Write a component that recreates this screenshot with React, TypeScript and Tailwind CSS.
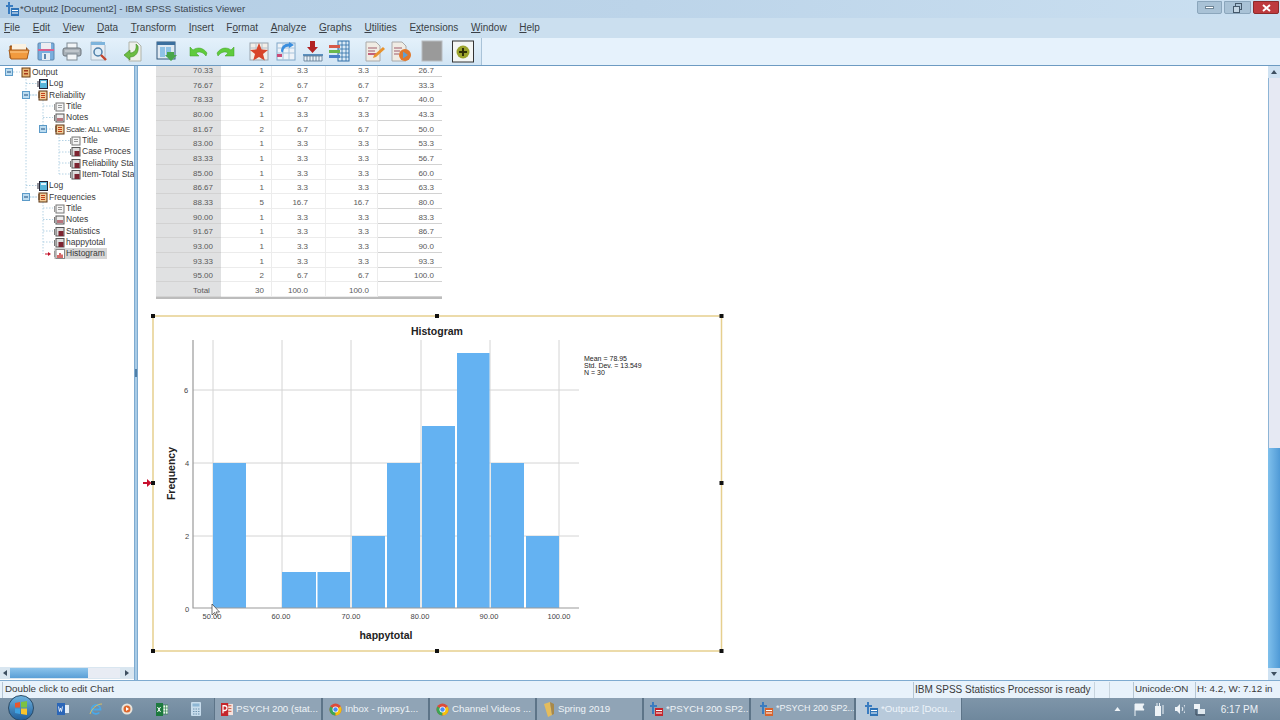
import type { ReactNode } from "react";

const menuItems: [string, string, string][] = [
  ["", "F", "ile"],
  ["", "E", "dit"],
  ["", "V", "iew"],
  ["", "D", "ata"],
  ["", "T", "ransform"],
  ["", "I", "nsert"],
  ["F", "o", "rmat"],
  ["", "A", "nalyze"],
  ["", "G", "raphs"],
  ["", "U", "tilities"],
  ["E", "x", "tensions"],
  ["", "W", "indow"],
  ["", "H", "elp"],
];

const tableRows = [
  ["70.33", "1", "3.3", "3.3", "26.7"],
  ["76.67", "2", "6.7", "6.7", "33.3"],
  ["78.33", "2", "6.7", "6.7", "40.0"],
  ["80.00", "1", "3.3", "3.3", "43.3"],
  ["81.67", "2", "6.7", "6.7", "50.0"],
  ["83.00", "1", "3.3", "3.3", "53.3"],
  ["83.33", "1", "3.3", "3.3", "56.7"],
  ["85.00", "1", "3.3", "3.3", "60.0"],
  ["86.67", "1", "3.3", "3.3", "63.3"],
  ["88.33", "5", "16.7", "16.7", "80.0"],
  ["90.00", "1", "3.3", "3.3", "83.3"],
  ["91.67", "1", "3.3", "3.3", "86.7"],
  ["93.00", "1", "3.3", "3.3", "90.0"],
  ["93.33", "1", "3.3", "3.3", "93.3"],
  ["95.00", "2", "6.7", "6.7", "100.0"],
  ["Total", "30", "100.0", "100.0", ""],
];

type TreeKind = "root" | "log" | "book" | "title" | "notes" | "table" | "hist";

// labels are what fits in the pane before it cuts them off
const treeRows: { label: string; pad: string; kind: TreeKind; selected?: boolean; text?: string }[] = [
  { label: "Output", pad: "pl-[20px]", kind: "root" },
  { label: "Log", pad: "pl-[37px]", kind: "log" },
  { label: "Reliability", pad: "pl-[37px]", kind: "book" },
  { label: "Title", pad: "pl-[54px]", kind: "title" },
  { label: "Notes", pad: "pl-[54px]", kind: "notes" },
  { label: "Scale: ALL VARIAE", pad: "pl-[54px]", kind: "book", text: "text-[8px] tracking-[-0.3px]" },
  { label: "Title", pad: "pl-[70px]", kind: "title" },
  { label: "Case Proces", pad: "pl-[70px]", kind: "table" },
  { label: "Reliability Sta", pad: "pl-[70px]", kind: "table" },
  { label: "Item-Total Sta", pad: "pl-[70px]", kind: "table" },
  { label: "Log", pad: "pl-[37px]", kind: "log" },
  { label: "Frequencies", pad: "pl-[37px]", kind: "book" },
  { label: "Title", pad: "pl-[54px]", kind: "title" },
  { label: "Notes", pad: "pl-[54px]", kind: "notes" },
  { label: "Statistics", pad: "pl-[54px]", kind: "table" },
  { label: "happytotal", pad: "pl-[54px]", kind: "table" },
  { label: "Histogram", pad: "pl-[54px]", kind: "hist", selected: true },
];

const bars = [
  [213, 246, 463],
  [282, 316, 572],
  [317.5, 350, 572],
  [352, 385, 536],
  [387, 420, 463],
  [422, 455, 426],
  [457, 489.5, 353],
  [491, 524, 463],
  [526, 559, 536],
];

const sans = "font-['Liberation_Sans',Arial,sans-serif]";

function TreeIcon({ kind }: { kind: TreeKind }) {
  const body: ReactNode = (() => {
    switch (kind) {
      case "root":
        return (
          <>
            <rect x="2" y="1" width="8" height="9" fill="#e9b877" stroke="#6b3c12" />
            <rect x="4" y="3" width="4" height="1.5" fill="#a53a1c" />
            <rect x="4" y="6" width="4" height="1.5" fill="#a53a1c" />
          </>
        );
      case "log":
        return (
          <>
            <rect x="2.5" y="1.5" width="8" height="9" fill="#58b4d8" stroke="#223" />
            <path d="M1 3v6" stroke="#223" />
            <rect x="4" y="3" width="5" height="2" fill="#dff3fb" />
          </>
        );
      case "book":
        return (
          <>
            <rect x="2" y="1" width="8" height="9" fill="#f2cf9c" stroke="#5c3512" />
            <path d="M1 3h2M1 5h2M1 7h2" stroke="#5c3512" />
            <path d="M4 3.5h4M4 5.5h4M4 7.5h4" stroke="#c2401a" />
          </>
        );
      case "title":
        return (
          <>
            <rect x="2" y="2" width="8" height="8" fill="#f5f5f5" stroke="#777" />
            <path d="M0.5 3v6" stroke="#999" />
            <path d="M4 4.5h4M4 6.5h4" stroke="#999" />
          </>
        );
      case "notes":
        return (
          <>
            <rect x="2" y="2" width="8" height="8" fill="#eee" stroke="#555" />
            <path d="M0.5 3v6" stroke="#777" />
            <rect x="3" y="6" width="6" height="3" fill="#b9747c" />
          </>
        );
      case "table":
        return (
          <>
            <rect x="2" y="1.5" width="8" height="8.5" fill="#ddd" stroke="#555" />
            <path d="M0.5 3v6" stroke="#777" />
            <rect x="4.5" y="5" width="5" height="5" fill="#7d2430" />
          </>
        );
      case "hist":
        return (
          <>
            <rect x="2" y="1.5" width="8.5" height="9" fill="#fff" stroke="#888" />
            <path d="M0.5 3v6" stroke="#999" />
            <path d="M4 10V7M6 10V5M8 10V6.5" stroke="#c22a2a" strokeWidth="1.4" />
          </>
        );
    }
  })();
  return (
    <svg width="11" height="11" viewBox="0 0 11 11" className="shrink-0">
      {body}
    </svg>
  );
}

function TreeLines() {
  return (
    <svg width="134" height="200" className="absolute left-0 top-0 pointer-events-none">
      <g stroke="#b4d2e4" strokeDasharray="1.5 1.5" fill="none">
        <path d="M26 10V131M26 17.5H37M26 29H37M26 119.5H37M26 131H37M13 6H20" />
        <path d="M43 34V63M43 40H53M43 51.5H53M43 63H53M30 29H37M30 131H37" />
        <path d="M59 68V108M59 74.5H70M59 86H70M59 97H70M59 108H70" />
        <path d="M43 136V188M43 142H53M43 153.5H53M43 165H53M43 176H53" />
      </g>
      <path d="M45 188H49" stroke="#c2122a" />
      <path d="M48 186l3 2-3 2z" fill="#c2122a" />
      {[
        [9, 6],
        [26, 29],
        [43, 63],
        [26, 131],
      ].map(([x, y]) => (
        <g key={`${x}-${y}`}>
          <rect x={x - 3.5} y={y - 3.5} width="7" height="7" fill="#bcdcf0" stroke="#5b9ac8" />
          <path d={`M${x - 2} ${y}h4`} stroke="#1f4f80" />
        </g>
      ))}
    </svg>
  );
}

function ToolIcon({ name }: { name: string }) {
  const body: ReactNode = (() => {
    switch (name) {
      case "open":
        return (
          <>
            <path d="M2 6h7l2 2h8v10H2z" fill="#c9752a" stroke="#8a4a14" />
            <rect x="4" y="4" width="14" height="6" fill="#fbf2e2" />
            <path d="M1 10h20l-2 9H3z" fill="#f19a3e" stroke="#a85d1c" />
            <path d="M2 12h18" stroke="#fbcb8d" />
          </>
        );
      case "save":
        return (
          <>
            <rect x="3" y="3" width="16" height="17" rx="1" fill="#7aaede" stroke="#5d86ad" />
            <rect x="6" y="3" width="10" height="6" fill="#ededf2" />
            <rect x="3" y="9" width="16" height="2" fill="#d9628f" />
            <rect x="7" y="13" width="8" height="7" fill="#e5edf4" />
            <rect x="9" y="14" width="2" height="5" fill="#5d86ad" />
          </>
        );
      case "print":
        return (
          <>
            <rect x="6" y="3" width="10" height="6" fill="#f2f5f7" stroke="#7e8a94" />
            <rect x="2" y="8" width="18" height="8" rx="2" fill="#a8b0b7" stroke="#6d757c" />
            <rect x="6" y="14" width="10" height="6" fill="#f2f5f7" stroke="#7e8a94" />
            <path d="M4 11h14" stroke="#d6dbdf" />
          </>
        );
      case "preview":
        return (
          <>
            <path d="M3 2h11l3 3v15H3z" fill="#e8eef4" stroke="#a8b8c6" />
            <rect x="3" y="2" width="14" height="3" fill="#7eb4dc" />
            <circle cx="10" cy="12" r="4" fill="#dcecf8" stroke="#4f7fa8" strokeWidth="1.5" />
            <path d="M13 15l5 5" stroke="#c4452c" strokeWidth="2.4" />
          </>
        );
      case "goto":
        return (
          <>
            <path d="M7 2h8l4 4v15H7z" fill="#eef0ec" stroke="#b0b4aa" />
            <path d="M14 4c1 6-2 9-6 9v-3l-6 5 6 5v-3c6 0 9-5 8-11z" fill="#6cbd42" stroke="#3e8a22" strokeWidth="0.6" />
          </>
        );
      case "table":
        return (
          <>
            <rect x="2" y="2" width="18" height="17" fill="#dfe9f2" stroke="#31567a" />
            <rect x="2" y="2" width="18" height="3" fill="#3b6f9e" />
            <rect x="5" y="7" width="5" height="10" fill="#8fc2e6" />
            <rect x="11" y="7" width="5" height="10" fill="#8fc2e6" />
            <path d="M13 13h7v3h3l-6 6-6-6h2z" transform="translate(-1 -1)" fill="#4aa64a" />
          </>
        );
      case "undo":
        return <path d="M3 16V7l3 3c4-3 10-3 14 3l-1 3c-3-4-7-5-10-3l3 3z" fill="#5fcb3c" stroke="#3f9e24" strokeWidth="0.5" />;
      case "redo":
        return <path d="M19 16V7l-3 3c-4-3-10-3-14 3l1 3c3-4 7-5 10-3l-3 3z" fill="#5fcb3c" stroke="#3f9e24" strokeWidth="0.5" />;
      case "star":
        return (
          <>
            <rect x="2" y="3" width="18" height="17" fill="#f2eee8" stroke="#9aa4ae" />
            <path d="M2 8h18M8 3v17M14 3v17" stroke="#b6c2cc" />
            <path d="M11 3l2.6 6.4 6.4.5-5 4.2 1.8 6.4L11 17l-5.8 3.500 1.800-6.400-5-4.200 6.400-.5z" fill="#d8442a" />
          </>
        );
      case "pivot":
        return (
          <>
            <rect x="2" y="3" width="18" height="17" fill="#eef3f8" stroke="#7fa6c8" />
            <path d="M2 8h18M2 13h18M8 3v17M14 3v17" stroke="#a8c4dc" />
            <path d="M19 5l-5 3v-1.500c-4 0-6 3-6 6l-2-1c0-5 3-8 8-8V2z" fill="#3a8ede" />
            <rect x="2" y="14" width="5" height="3" fill="#c94a78" />
          </>
        );
      case "insert":
        return (
          <>
            <path d="M8 1h5v6h3l-5.500 6L5 7h3z" fill="#b22222" />
            <rect x="1" y="14" width="20" height="2" fill="#5a8fbe" />
            <path d="M2 16h18v5H2zM5 16v5M8 16v5M11 16v5M14 16v5M17 16v5" fill="#eaf2f8" stroke="#5a7690" strokeWidth="0.8" />
          </>
        );
      case "cols":
        return (
          <>
            <rect x="10" y="1" width="11" height="20" fill="#dbeaf6" stroke="#2f6fa8" />
            <path d="M10 5h11M10 9h11M10 13h11M10 17h11M14 1v20M18 1v20" stroke="#2f6fa8" strokeWidth="0.8" />
            <rect x="1" y="5" width="11" height="3" fill="#d65a4a" />
            <rect x="1" y="10" width="11" height="3" fill="#6ab84e" />
            <rect x="1" y="15" width="11" height="3" fill="#4a80c8" />
          </>
        );
      case "note":
        return (
          <>
            <path d="M4 2h10l4 4v15H4z" fill="#f0ece4" stroke="#aaa" />
            <path d="M6 8h9M6 11h7" stroke="#a05a6a" />
            <rect x="6" y="13" width="8" height="2" fill="#c2607a" />
            <path d="M21 7l2 2-9 8-3 1 1-3z" fill="#e8932e" />
          </>
        );
      case "script":
        return (
          <>
            <path d="M3 2h10l4 4v15H3z" fill="#f0ece4" stroke="#aaa" />
            <path d="M5 8h8M5 11h6M5 14h5" stroke="#a05a6a" />
            <circle cx="16" cy="15" r="6" fill="#e0772a" />
            <path d="M14 11.500l5 3.500-5 3.500z" fill="#5f9fd0" />
          </>
        );
      case "gray":
        return <rect x="0" y="1" width="20" height="20" fill="#9a9a9a" stroke="#b8bcc0" />;
      case "circle":
        return (
          <>
            <rect x="0.5" y="1" width="21" height="21" fill="#f4f6f4" stroke="#333" />
            <circle cx="11" cy="12" r="6.500" fill="#9ba32c" />
            <path d="M10 8h2v3h3v2h-3v3h-2v-3H7v-2h3z" fill="#2f3008" />
          </>
        );
      default:
        return null;
    }
  })();
  return (
    <svg width="22" height="23" viewBox="0 0 22 23" className="shrink-0 overflow-visible">
      {body}
    </svg>
  );
}

const toolIcons: [string, string][] = [
  ["open", "ml-[8px]"],
  ["save", "ml-[5px]"],
  ["print", "ml-[4px]"],
  ["preview", "ml-[5px]"],
  ["goto", "ml-[12px]"],
  ["table", "ml-[11px]"],
  ["undo", "ml-[10px]"],
  ["redo", "ml-[6px]"],
  ["star", "ml-[11px]"],
  ["pivot", "ml-[5px]"],
  ["insert", "ml-[5px]"],
  ["cols", "ml-[4px]"],
  ["note", "ml-[12px]"],
  ["script", "ml-[5px]"],
  ["gray", "ml-[11px]"],
  ["circle", "ml-[8px]"],
];

function Chart() {
  return (
    <svg width="570" height="336" viewBox="153 316 570 336" className={`block overflow-visible ${sans}`}>
      {/* gridlines */}
      <g stroke="#d4d4d4" strokeWidth="1">
        <path d="M213 340V608M282 340V608M351 340V608M421 340V608M490 340V608M559 340V608" />
        <path d="M193 390H579M193 463H579M193 536H579" />
      </g>
      {bars.map(([x1, x2, top]) => (
        <rect key={x1} x={x1} y={top} width={x2 - x1} height={608 - top} fill="#64b2f2" />
      ))}
      <path d="M193 340V608H579" stroke="#9a9a9a" strokeWidth="1.200" fill="none" />

      <g fill="#444" fontSize="7.500">
        <text x="186" y="393" textAnchor="middle">6</text>
        <text x="187" y="466" textAnchor="middle">4</text>
        <text x="187" y="539" textAnchor="middle">2</text>
        <text x="187" y="612" textAnchor="middle">0</text>
        {[
          ["50.00", 212],
          ["60.00", 281],
          ["70.00", 351],
          ["80.00", 420],
          ["90.00", 489],
          ["100.00", 559],
        ].map(([label, x]) => (
          <text key={label} x={x} y="618.500" textAnchor="middle">
            {label}
          </text>
        ))}
      </g>

      <g fill="#222" fontSize="7">
        <text x="584" y="360.500">Mean = 78.95</text>
        <text x="584" y="367.500">Std. Dev. = 13.549</text>
        <text x="584" y="374.500">N = 30</text>
      </g>

      <text x="437" y="335" textAnchor="middle" fontSize="10.500" fontWeight="bold" fill="#222">Histogram</text>
      <text x="386" y="639" textAnchor="middle" fontSize="10.500" fontWeight="bold" fill="#222">happytotal</text>
      <text
        x="0"
        y="0"
        transform="translate(175 473.500) rotate(-90)"
        textAnchor="middle"
        fontSize="10.500"
        fontWeight="bold"
        fill="#222"
      >
        Frequency
      </text>

      {/* selection frame */}
      <rect x="153" y="316" width="568.500" height="335" fill="none" stroke="#e6cf8e" strokeWidth="1.500" />
      {[
        [153, 316],
        [437, 316],
        [721.500, 316],
        [153, 483],
        [721.500, 483],
        [153, 651],
        [437, 651],
        [721.500, 651],
      ].map(([x, y]) => (
        <rect key={`${x}-${y}`} x={x - 2} y={y - 2} width="4" height="4" fill="#111" />
      ))}
      <path d="M143 482h4v-3l4.500 4-4.500 4v-3h-4z" fill="#c8102e" />

      {/* mouse pointer */}
      <path d="M212 604v11l2.500-2.500 2 4 1.500-.8-2-3.700h3.500z" fill="#fff" stroke="#333" strokeWidth="0.7" />
    </svg>
  );
}

function ScrollArrow({ dir }: { dir: "up" | "down" | "left" | "right" }) {
  const d = { up: "M2 7l3-4 3 4z", down: "M2 3l3 4 3-4z", left: "M7 2l-4 3 4 3z", right: "M3 2l4 3-4 3z" }[dir];
  return (
    <svg width="10" height="10" viewBox="0 0 10 10">
      <path d={d} fill="#3d4f60" />
    </svg>
  );
}

function AppIcon({ name }: { name: string }) {
  switch (name) {
    case "chrome":
      return (
        <svg width="13" height="13" viewBox="0 0 14 14" className="shrink-0">
          <circle cx="7" cy="7" r="6.500" fill="#dd4b39" />
          <path d="M7 7L1.400 3.800A6.500 6.500 0 0 0 7 13.500z" fill="#3aa655" />
          <path d="M7 7l5.600-3.200A6.500 6.500 0 0 1 7 13.500z" fill="#f4c20d" />
          <circle cx="7" cy="7" r="3.200" fill="#fff" />
          <circle cx="7" cy="7" r="2.400" fill="#4a8af4" />
        </svg>
      );
    case "ppt":
      return (
        <svg width="12" height="13" viewBox="0 0 15 14" className="shrink-0" preserveAspectRatio="none">
          <rect x="5" y="1" width="10" height="12" fill="#f6e2dc" />
          <path d="M9 3h4M9 6h4M9 9h4" stroke="#c4452c" />
          <rect x="0" y="0" width="9" height="14" fill="#c4262c" />
          <path d="M2.500 11V3h2.500a2 2 0 0 1 0 5H2.500" fill="none" stroke="#fff" strokeWidth="1.500" />
        </svg>
      );
    case "folder":
      return (
        <svg width="12" height="16" viewBox="0 0 12 16" className="shrink-0">
          <path d="M1 3l6-2 2 13-4 2z" fill="#e4bc5c" />
          <path d="M7 1l4 2v10l-2 1z" fill="#a8894a" />
        </svg>
      );
    case "spss-red":
    case "spss-orange":
    case "spss-blue": {
      const c = name === "spss-red" ? "#c4262c" : name === "spss-orange" ? "#d8632c" : "#2f74b8";
      return (
        <svg width="13" height="14" viewBox="0 0 13 14" className="shrink-0">
          <path d="M2 0h2v3h3v2H4v7H2V5H0V3h2z" fill="#3a7cc0" />
          <rect x="5" y="6" width="8" height="8" fill={c} />
          <path d="M6 8.500h6M6 11h6" stroke="#fff" />
        </svg>
      );
    }
    default:
      return null;
  }
}

function TaskButton({
  icon,
  label,
  width,
  active,
  pad = "pl-[6px]",
  size = "text-[9.700px]",
}: {
  icon: string;
  label: string;
  width: string;
  active?: boolean;
  pad?: string;
  size?: string;
}) {
  return (
    <div
      className={`${width} ${pad} ${size} h-[22px] shrink-0 flex items-center gap-[3px] overflow-hidden whitespace-nowrap border-l border-r border-[#5d7488] ${
        active ? "bg-[#b8cadb] text-[#eef4fa]" : "bg-[#90a4b6] text-[#eef3f7]"
      }`}
    >
      <AppIcon name={icon} />
      <span>{label}</span>
    </div>
  );
}

export default function App() {
  return (
    <div className={`w-[1280px] h-[720px] overflow-hidden flex flex-col bg-[#c9deee] text-[#333] ${sans}`}>
      {/* title bar */}
      <div className="h-[18px] flex items-center bg-gradient-to-r from-[#b3cde4] via-[#bcd4e9] to-[#cbe0f1] relative">
        <div className="ml-[6px] w-[14px]">
          <AppIcon name="spss-blue" />
        </div>
        <span className="pt-[1px] text-[9.750px] text-[#3c4650] whitespace-nowrap">
          *Output2 [Document2] - IBM SPSS Statistics Viewer
        </span>
        <div className="ml-auto mr-[1px] mt-[1px] self-start flex gap-[2px]">
          <div className="w-[25px] h-[13px] rounded-b-[2px] border border-[#8ba6bc] bg-[#a9c2d6] flex items-center justify-center">
            <div className="w-[9px] h-[3px] bg-white border border-[#6f8596]" />
          </div>
          <div className="w-[27px] h-[13px] rounded-b-[2px] border border-[#8ba6bc] bg-[#a9c2d6] flex items-center justify-center">
            <svg width="11" height="10" viewBox="0 0 11 10">
              <rect x="3.500" y="0.500" width="6" height="6" fill="none" stroke="#44586a" />
              <rect x="1.500" y="3.500" width="6" height="6" fill="#c4d6e4" stroke="#44586a" />
            </svg>
          </div>
          <div className="w-[26px] h-[13px] rounded-b-[2px] border border-[#8c2a2a] bg-[#be3a3e] flex items-center justify-center">
            <svg width="9" height="8" viewBox="0 0 9 8">
              <path d="M1 1l7 6M8 1L1 7" stroke="#fff" strokeWidth="2" />
            </svg>
          </div>
        </div>
      </div>

      {/* menu bar */}
      <div className="h-[20px] flex items-center gap-[12.700px] pl-[4px] pb-[2px] text-[10px] text-[#3a3f46] bg-[#cbdfef]">
        {menuItems.map(([pre, key, rest]) => (
          <span key={key + rest}>
            {pre}
            <u>{key}</u>
            {rest}
          </span>
        ))}
      </div>

      {/* toolbar */}
      <div className="h-[28px] bg-[#e6f2fc] border-b border-[#6d9bc2]">
        <div className="w-[482px] h-[27px] flex items-center bg-gradient-to-b from-[#e4f1fb] to-[#d2e5f4] border-r border-[#a9c3d8]">
          {toolIcons.map(([name, margin]) => (
            <div key={name} className={margin}>
              <ToolIcon name={name} />
            </div>
          ))}
        </div>
      </div>

      {/* panes */}
      <div className="h-[614px] flex">
        <div className="w-[134px] flex flex-col bg-white">
          <div className="flex-1 relative overflow-hidden">
            <TreeLines />
            <div className="relative pt-[1px] text-[8.500px] leading-[11px] text-[#3a3a3a]">
              {treeRows.map((row, i) => (
                <div key={i} className={`h-[11.340px] flex items-center whitespace-nowrap ${row.pad}`}>
                  <div className={`flex items-center ${row.selected ? "bg-[#d6d6d6] pr-[1px]" : ""}`}>
                    <TreeIcon kind={row.kind} />
                    <span className={`px-[1px] ${row.text ?? ""}`}>{row.label}</span>
                  </div>
                </div>
              ))}
            </div>
          </div>
          <div className="h-[12px] mb-[1px] flex items-center bg-[#d9e6f0]">
            <ScrollArrow dir="left" />
            <div className="w-[78px] h-[10px] bg-gradient-to-b from-[#8cc4ec] to-[#5a9fd6]" />
            <div className="w-[32px] h-[10px] bg-[#e8ecf4]" />
            <div className="ml-auto mr-[2px]">
              <ScrollArrow dir="right" />
            </div>
          </div>
        </div>

        {/* splitter */}
        <div className="w-[3px] bg-[#a8cbe6] border-l border-[#7fabd0] flex items-center">
          <div className="w-[2px] h-[8px] bg-[#4f7fa8]" />
        </div>

        {/* output pane */}
        <div className="flex-1 flex bg-white border-l border-[#7fabd0] overflow-hidden">
          <div className="flex-1 overflow-hidden pl-[15px]">
            <div className="ml-[3px] -mt-[3.700px] w-[286px] text-[8px] text-[#5a5a5a] grid grid-cols-[65px_51px_54px_52px_64px] auto-rows-[14.670px] border-b-2 border-[#bcbcbc]">
              {tableRows.map((row) =>
                row.map((cell, c) => {
                  const cls =
                    c === 0
                      ? "bg-[#e0e1e2] pl-[37px]"
                      : c === 1
                        ? "text-right pr-[7px] border-r border-[#ececec]"
                        : c === 2
                          ? "text-right pr-[17px] border-r border-[#ececec]"
                          : c === 3
                            ? "text-right pr-[8px] border-r border-[#ececec]"
                            : "text-right pr-[8px]";
                  return (
                    <div key={row[0] + c} className={`flex items-center pt-[4px] ${c > 0 ? "justify-end" : ""} border-b border-[#d2d2d2] ${cls}`}>
                      {cell}
                    </div>
                  );
                })
              )}
            </div>
            <div className="mt-[17px]">
              <Chart />
            </div>
          </div>
          <div className="w-[12px] flex flex-col bg-[#5aa8e0]">
            <div className="h-[12px] bg-[#cfe2f2] flex items-center justify-center">
              <ScrollArrow dir="up" />
            </div>
            <div className="h-[370px] bg-[#e6e9f3] border-l border-[#8db4d6]" />
            <div className="flex-1 bg-gradient-to-r from-[#7fc0ec] to-[#4f9ad6]" />
            <div className="h-[12px] bg-[#cfe2f2] flex items-center justify-center">
              <ScrollArrow dir="down" />
            </div>
          </div>
        </div>
      </div>

      {/* status bar */}
      <div className="h-[18px] flex items-center bg-[#e8f2fb] border-t border-[#7fabd0] text-[9.800px] text-[#3a3a3a] whitespace-nowrap">
        <div className="h-[16px] ml-[2px] pl-[2px] border-l border-[#b6c6d4] flex items-center">Double click to edit Chart</div>
        <div className="ml-auto h-[16px] w-[181px] pl-[1px] border-l border-[#b6c6d4] flex items-center text-[10px]">
          IBM SPSS Statistics Processor is ready
        </div>
        <div className="h-[16px] w-[15px] border-l border-[#c8d4de]" />
        <div className="h-[16px] w-[24px] border-l border-[#c8d4de]" />
        <div className="h-[16px] w-[62px] pl-[1px] border-l border-[#b6c6d4] flex items-center">Unicode:ON</div>
        <div className="h-[16px] w-[80px] pl-[1px] mr-[5px] border-l border-[#b6c6d4] flex items-center">H: 4.2, W: 7.12 in</div>
      </div>

      {/* taskbar */}
      <div className="h-[22px] flex items-center bg-gradient-to-b from-[#7e95a9] to-[#6f889d] relative">
        <div className="w-[214px] flex items-center shrink-0 h-full">
          <div className="ml-[8px] -mt-[3px] w-[26px] h-[26px] rounded-full bg-gradient-to-b from-[#6fb3df] to-[#1f5f9c] border border-[#2a4a66] flex items-center justify-center shrink-0">
            <svg width="14" height="14" viewBox="0 0 14 14">
              <path d="M1 2l5-1v5.500H1z" fill="#e8572e" />
              <path d="M7 1l6-1v6.500H7z" fill="#7cc242" />
              <path d="M1 7.500h5V13l-5-1z" fill="#3ea0e0" />
              <path d="M7 7.500h6V14l-6-1z" fill="#f8c42c" />
            </svg>
          </div>
          <svg width="12" height="12" viewBox="0 0 12 12" className="ml-[23px] shrink-0">
            <rect width="8" height="12" x="0" fill="#2b66b8" />
            <rect x="8" y="2" width="4" height="8" fill="#e4edf7" />
            <path d="M1.500 3.500l1 5 1-3.500 1 3.500 1-5" stroke="#fff" fill="none" strokeWidth="0.8" />
          </svg>
          <svg width="14" height="14" viewBox="0 0 14 14" className="ml-[20px] shrink-0">
            <path d="M2.500 7.500h9a4.500 4.500 0 1 0-1.200 3" fill="none" stroke="#4aa8e8" strokeWidth="1.800" />
            <path d="M1 12c2-6 7-10 12-10" stroke="#f2c84c" fill="none" strokeWidth="0.8" />
          </svg>
          <svg width="12" height="12" viewBox="0 0 12 12" className="ml-[18px] shrink-0">
            <circle cx="6" cy="6" r="5.500" fill="#e8e4dc" />
            <circle cx="6" cy="6" r="3.500" fill="#e0672c" />
            <path d="M5 4l3 2-3 2z" fill="#fff" />
          </svg>
          <svg width="12" height="13" viewBox="0 0 12 13" className="ml-[23px] shrink-0">
            <rect width="7" height="13" fill="#1d7a3e" />
            <path d="M7 2h5v9H7zM9.500 2v9M7 5h5M7 8h5" fill="#eef6ee" stroke="#1d7a3e" strokeWidth="0.6" />
            <path d="M1.500 4l3 5M4.500 4l-3 5" stroke="#fff" />
          </svg>
          <svg width="10" height="14" viewBox="0 0 10 14" className="ml-[23px] shrink-0">
            <rect width="10" height="14" rx="1" fill="#c7dcec" />
            <rect x="1.500" y="1.500" width="7" height="3" fill="#8db6d4" />
            <path d="M2 7h1.500M4.500 7H6M7 7h1.500M2 9.500h1.500M4.500 9.500H6M7 9.500h1.500M2 12h1.500M4.500 12H6M7 12h1.500" stroke="#6f94b0" />
          </svg>
        </div>
        <TaskButton icon="ppt" label="PSYCH 200 (stat..." width="w-[108px]" />
        <TaskButton icon="chrome" label="Inbox - rjwpsy1..." width="w-[107px]" />
        <TaskButton icon="chrome" label="Channel Videos ..." width="w-[107px]" />
        <TaskButton icon="folder" label="Spring 2019" width="w-[107px]" />
        <TaskButton icon="spss-red" label="*PSYCH 200 SP2..." width="w-[107px]" />
        <TaskButton icon="spss-orange" label="*PSYCH 200 SP2..." width="w-[105px]" pad="pl-[9px]" size="text-[9px]" />
        <TaskButton icon="spss-blue" label="*Output2 [Docu..." width="w-[107px]" pad="pl-[9px]" active />
        <div className="ml-auto flex items-center gap-[9px] pr-[22px] text-[10px] text-[#eef3f7]">
          <svg width="7" height="6" viewBox="0 0 7 6">
            <path d="M0.500 5l3-4 3 4z" fill="#eef3f7" />
          </svg>
          <svg width="11" height="13" viewBox="0 0 11 13" className="ml-[4px]">
            <path d="M1 1v12M1 1h9l-2 3 2 3H1" fill="#eef3f7" stroke="#eef3f7" />
          </svg>
          <svg width="11" height="13" viewBox="0 0 11 13">
            <rect x="1" y="3" width="6" height="10" fill="#eef3f7" />
            <path d="M3 0v3M5.500 0v3M9 2v9" stroke="#eef3f7" />
          </svg>
          <svg width="11" height="12" viewBox="0 0 11 12">
            <path d="M1 4h2l3-3v10L3 8H1z" fill="#eef3f7" />
            <path d="M8 4c1 1 1 3 0 4M10 2c2 2 2 6 0 8" stroke="#eef3f7" fill="none" />
          </svg>
          <svg width="12" height="13" viewBox="0 0 12 13">
            <rect x="0" y="1" width="6" height="5" fill="#eef3f7" />
            <rect x="4" y="6" width="7" height="5" fill="#dfe8ef" />
            <path d="M2 6v6h9" stroke="#39495a" fill="none" />
          </svg>
          <span className="ml-[6px]">6:17 PM</span>
        </div>
      </div>
    </div>
  );
}
